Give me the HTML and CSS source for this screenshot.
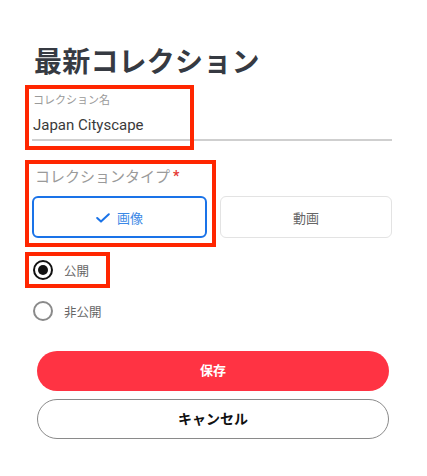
FILE: index.html
```html
<!DOCTYPE html>
<html lang="ja">
<head>
<meta charset="utf-8">
<title>最新コレクション</title>
<link rel="stylesheet" href="styles.css">
</head>
<body>
<div class="page">
  <h1 class="title">最新コレクション</h1>

  <div class="field">
    <div class="field-label">コレクション名</div>
    <div class="field-input">Japan Cityscape</div>
    <div class="mark mark-name"></div>
  </div>

  <div class="type-group">
    <div class="group-label">コレクションタイプ<span class="req">*</span></div>
    <div class="type-options">
      <div class="type-btn type-btn-active">
        <svg class="check" width="14" height="10" viewBox="0 0 14 10"><polyline points="1.2,5 5,8.6 12.8,1.2" fill="none" stroke="#1a73e8" stroke-width="2" stroke-linecap="round" stroke-linejoin="round"/></svg>
        <span>画像</span>
      </div>
      <div class="type-btn">動画</div>
    </div>
    <div class="mark mark-type"></div>
  </div>

  <div class="radios">
    <div class="radio-row">
      <span class="radio radio-on"></span>
      <span class="radio-text">公開</span>
      <div class="mark mark-radio"></div>
    </div>
    <div class="radio-row">
      <span class="radio"></span>
      <span class="radio-text">非公開</span>
    </div>
  </div>

  <div class="actions">
    <button class="btn btn-save">保存</button>
    <button class="btn btn-cancel">キャンセル</button>
  </div>
</div>
</body>
</html>
```

FILE: styles.css
```css
* { box-sizing: border-box; }
html, body { margin: 0; padding: 0; background: #fff; }
body {
  font-family: Roboto, "Noto Sans CJK JP", sans-serif;
  color: #333;
}
.page {
  width: 427px;
  padding: 42px 35px 0 32px;
}
.title {
  margin: 0 0 0 2px;
  font-family: "Noto Sans CJK JP", sans-serif;
  font-size: 28px;
  line-height: 36px;
  font-weight: 700;
  color: #363a42;
  letter-spacing: 0.2px;
}
.field {
  position: relative;
  margin-top: 14px;
}
.field-label {
  padding-left: 1px;
  font-family: "Noto Sans CJK JP", sans-serif;
  font-size: 11px;
  line-height: 14px;
  color: #9a9a9a;
}
.field-input {
  margin-top: 9px;
  padding-left: 1px;
  padding-bottom: 4px;
  font-size: 15px;
  line-height: 20px;
  color: #3a3a3a;
  border-bottom: 2px solid #cfcfcf;
}
.mark {
  position: absolute;
  border: 4px solid #ff2600;
  pointer-events: none;
}
.mark-name { left: -7px; top: -7px; width: 169px; height: 65px; }
.type-group {
  position: relative;
  margin-top: 25px;
}
.group-label {
  padding-left: 3px;
  font-family: "Noto Sans CJK JP", sans-serif;
  font-size: 15px;
  line-height: 20px;
  color: #9a9a9a;
}
.req {
  color: #e53935;
  font-family: Roboto, sans-serif;
  font-weight: 700;
  font-size: 14px;
  margin-left: 3px;
  vertical-align: 1px;
}
.type-options {
  margin-top: 10px;
  display: grid;
  grid-template-columns: 175px 172px;
  column-gap: 13px;
}
.type-btn {
  height: 42px;
  display: flex;
  align-items: center;
  justify-content: center;
  gap: 7px;
  border: 1px solid #e3e3e3;
  border-radius: 6px;
  font-family: "Noto Sans CJK JP", sans-serif;
  font-size: 13px;
  color: #666;
}
.type-btn-active {
  border: 2px solid #1a73e8;
  color: #3b88e6;
}
.check { display: block; margin-top: 1px; }
.mark-type { left: -7px; top: -6px; width: 191px; height: 87px; }
.radios {
  margin-top: 22px;
  display: flex;
  flex-direction: column;
  gap: 21px;
}
.radio-row {
  position: relative;
  display: flex;
  align-items: center;
  height: 20px;
  padding-left: 1px;
}
.radio {
  width: 20px;
  height: 20px;
  border-radius: 50%;
  border: 2px solid #8a8a8a;
  display: flex;
  align-items: center;
  justify-content: center;
}
.radio-on { border-color: #111; }
.radio-on::after {
  content: "";
  width: 10px;
  height: 10px;
  border-radius: 50%;
  background: #111;
}
.radio-text {
  margin-left: 11px;
  font-family: "Noto Sans CJK JP", sans-serif;
  font-size: 12.5px;
  color: #666;
}
.mark-radio { left: -7px; top: -8px; width: 85px; height: 36px; }
.actions {
  margin-top: 30px;
  margin-left: 5px;
  width: 352px;
  display: flex;
  flex-direction: column;
  gap: 8px;
}
.btn {
  height: 40px;
  border-radius: 20px;
  font-family: "Noto Sans CJK JP", sans-serif;
  font-weight: 700;
  line-height: 1;
  padding: 0 0 3px;
  cursor: pointer;
}
.btn-save {
  border: none;
  background: #ff3343;
  color: #fff;
  font-size: 13px;
}
.btn-cancel {
  border: 1px solid #8a8a8a;
  background: #fff;
  color: #111;
  font-size: 14px;
}
```
